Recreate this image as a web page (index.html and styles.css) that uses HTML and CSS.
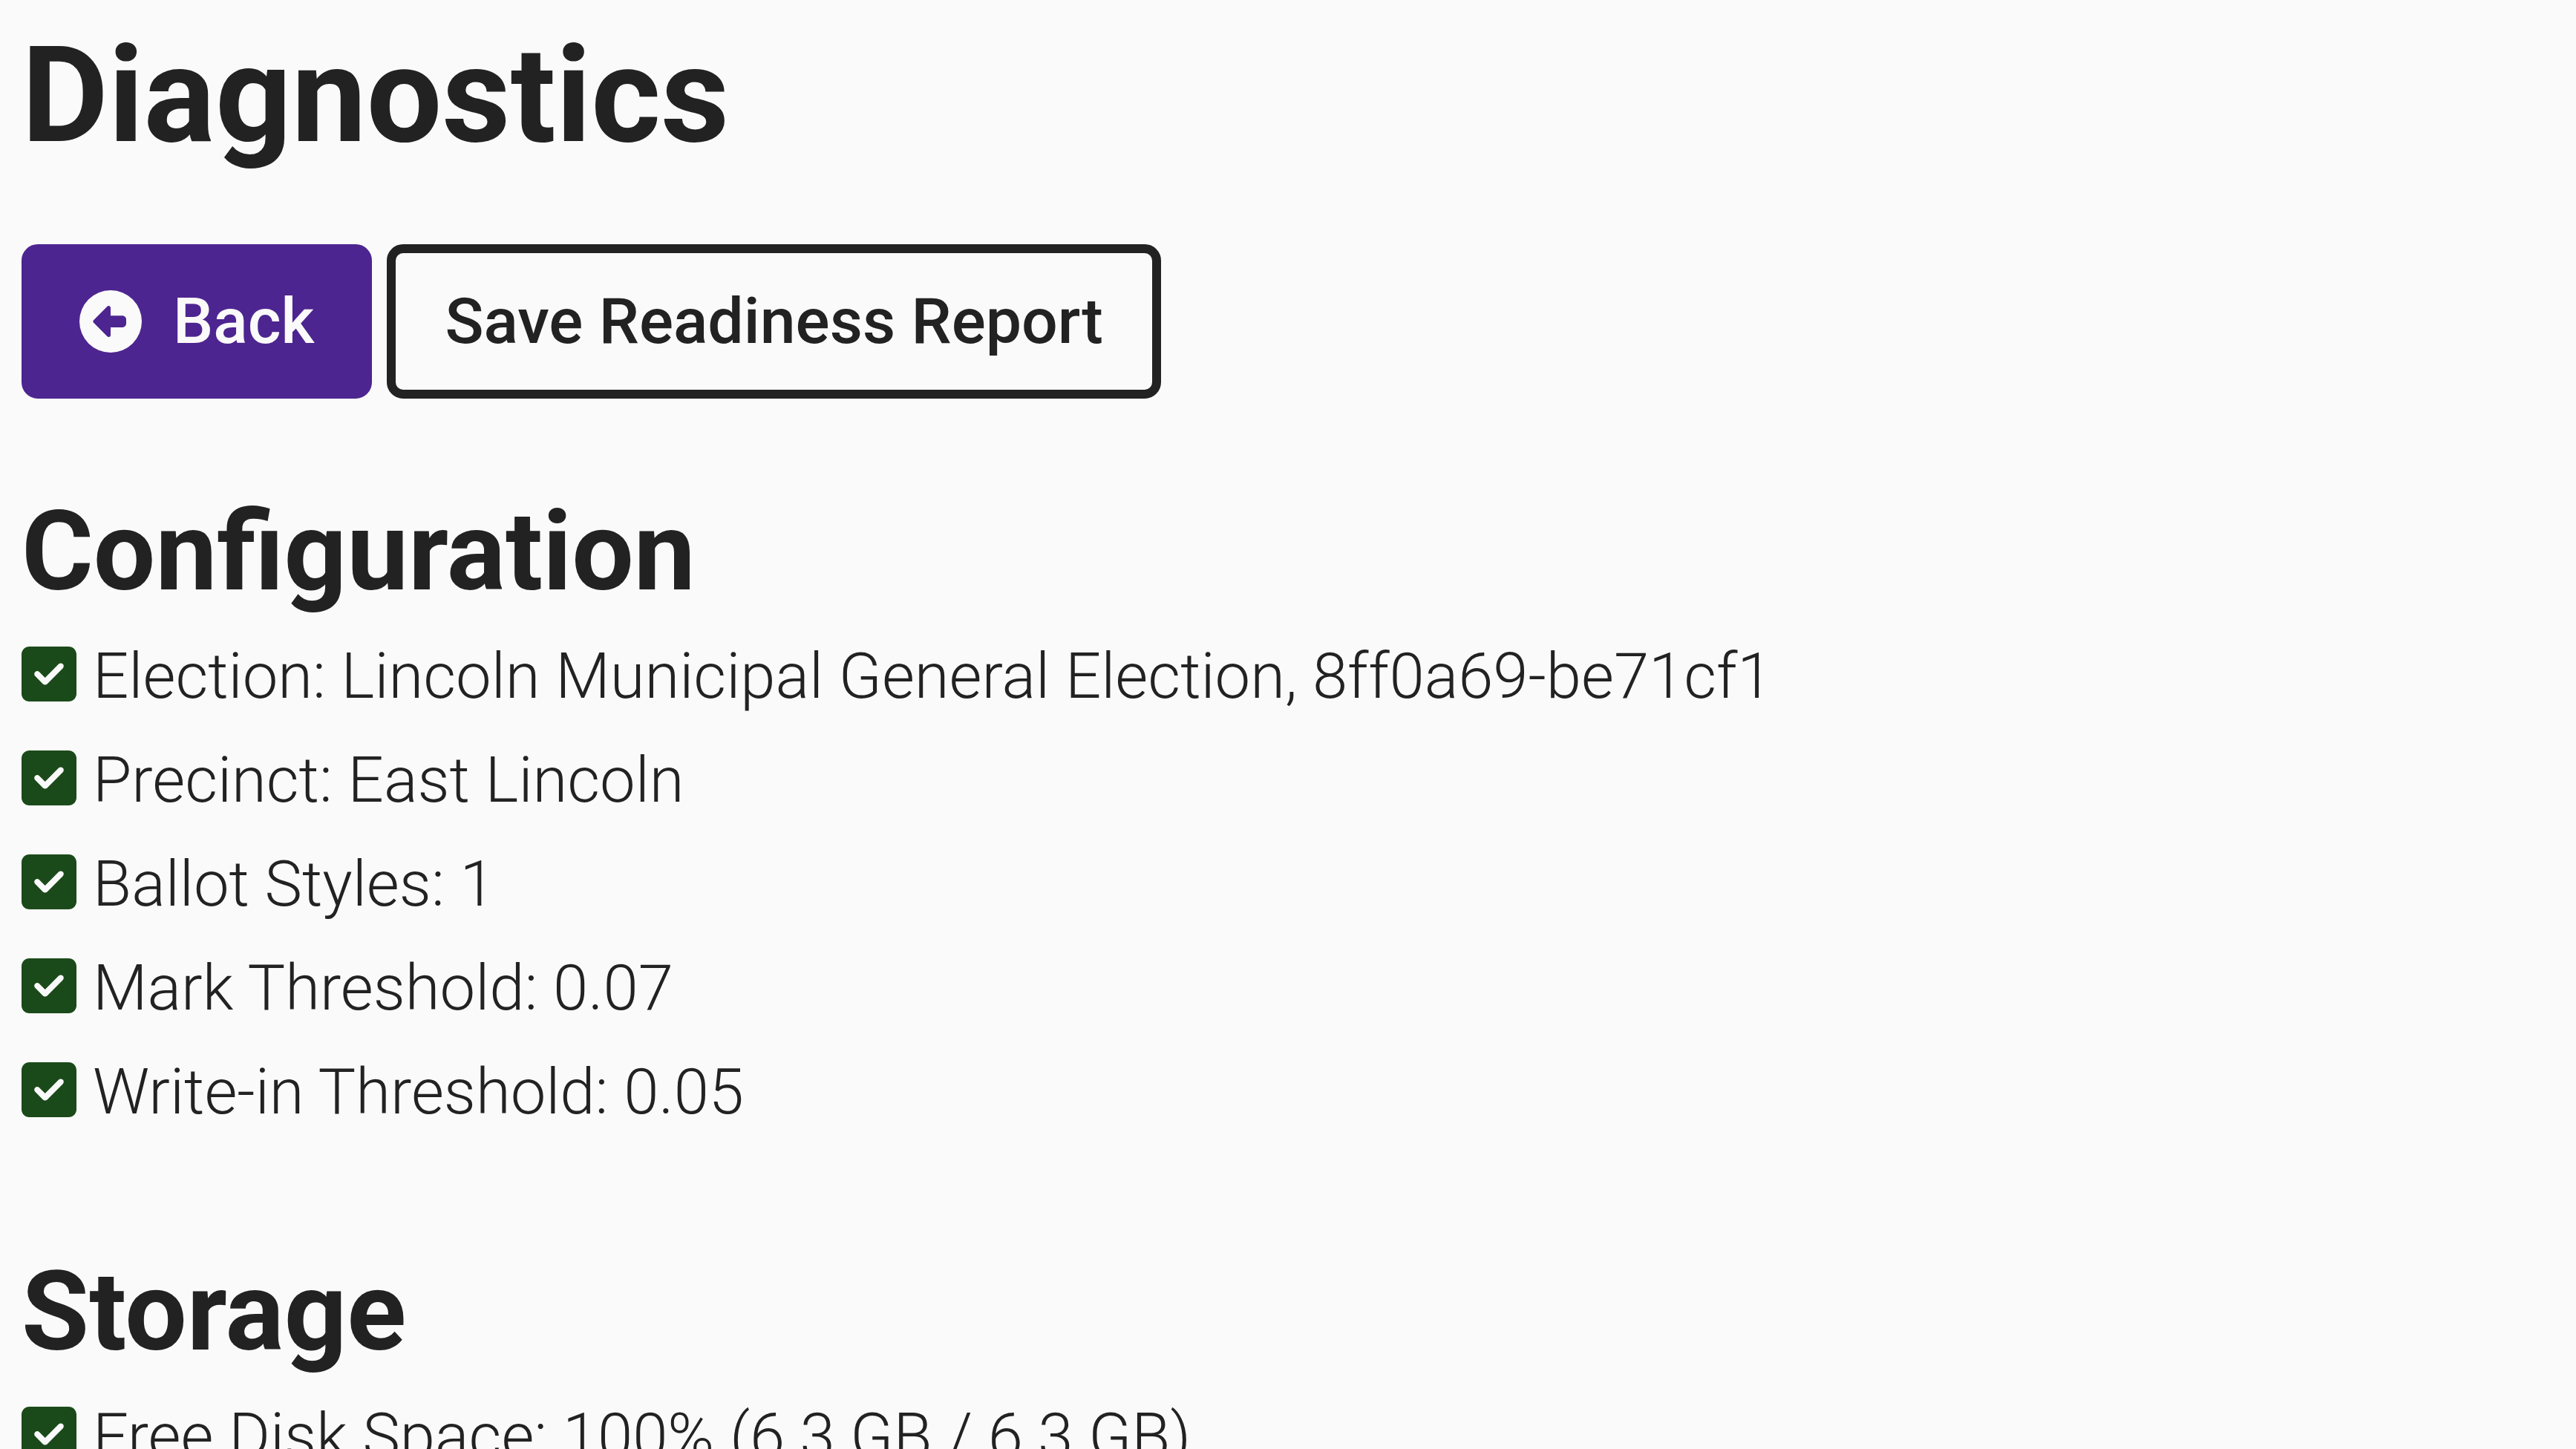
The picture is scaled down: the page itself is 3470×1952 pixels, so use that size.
FILE: index.html
```html
<!DOCTYPE html>
<html lang="en">
<head>
<meta charset="utf-8">
<meta name="viewport" content="width=device-width, initial-scale=1">
<title>Diagnostics</title>
<link rel="stylesheet" href="styles.css">
</head>
<body>
<svg class="sprite" aria-hidden="true">
  <symbol id="check" viewBox="0 32 448 448"><path d="M64 32C28.700 32 0 60.700 0 96V416c0 35.300 28.700 64 64 64H384c35.300 0 64-28.700 64-64V96c0-35.300-28.700-64-64-64H64zM337 209L209 337c-9.400 9.400-24.600 9.400-33.900 0l-64-64c-9.400-9.400-9.400-24.600 0-33.900s24.600-9.400 33.900 0l47 47L303 175c9.400-9.400 24.600-9.400 33.900 0s9.400 24.600 0 33.900z"/></symbol>
</svg>
<main class="screen">
  <h1 class="title">Diagnostics</h1>
  <div class="actions">
    <button class="button button-primary" type="button">
      <svg class="button-icon" viewBox="0 0 512 512" aria-hidden="true"><path d="M512 256A256 256 0 1 0 0 256a256 256 0 1 0 512 0zM116.700 244.700l112-112c4.600-4.600 11.500-5.900 17.400-3.500s9.900 8.300 9.900 14.800l0 64 96 0c17.700 0 32 14.300 32 32l0 32c0 17.700-14.300 32-32 32l-96 0 0 64c0 6.500-3.900 12.300-9.900 14.800s-12.900 1.100-17.400-3.500l-112-112c-6.200-6.200-6.200-16.400 0-22.600z"/></svg>
      <span>Back</span>
    </button>
    <button class="button" type="button">Save Readiness Report</button>
  </div>
  <section class="section">
    <h2 class="heading">Configuration</h2>
    <ul class="list">
      <li class="item"><svg class="check" aria-hidden="true"><use href="#check"/></svg><span>Election: Lincoln Municipal General Election, 8ff0a69-be71cf1</span></li>
      <li class="item"><svg class="check" aria-hidden="true"><use href="#check"/></svg><span>Precinct: East Lincoln</span></li>
      <li class="item"><svg class="check" aria-hidden="true"><use href="#check"/></svg><span>Ballot Styles: 1</span></li>
      <li class="item"><svg class="check" aria-hidden="true"><use href="#check"/></svg><span>Mark Threshold: 0.07</span></li>
      <li class="item"><svg class="check" aria-hidden="true"><use href="#check"/></svg><span>Write-in Threshold: 0.05</span></li>
    </ul>
  </section>
  <section class="section">
    <h2 class="heading">Storage</h2>
    <ul class="list">
      <li class="item"><svg class="check" aria-hidden="true"><use href="#check"/></svg><span>Free Disk Space: 100% (6.3 GB / 6.3 GB)</span></li>
    </ul>
  </section>
</main>
</body>
</html>
```

FILE: styles.css
```css
* { box-sizing: border-box; }
html { height: 100%; }
body {
  margin: 0;
  height: 100%;
  overflow: hidden;
  background: #fafafa;
  color: #222222;
  font: 300 85px/104px Roboto, sans-serif;
}
.sprite { display: none; }
.screen { padding: 21px 29px; }
.title { margin: 0 0 92px; font-size: 180px; line-height: 216px; font-weight: 700; }
.actions { display: flex; gap: 20px; margin-bottom: 117px; }
.button {
  display: flex;
  align-items: center;
  gap: 42px;
  height: 208px;
  padding: 0 66px;
  border: 12px solid #222222;
  border-radius: 22px;
  background: none;
  color: #222222;
  font: 500 86px/104px Roboto, sans-serif;
  white-space: nowrap;
}
.button-primary { border-color: #4d2590; background: #4d2590; color: #fafafa; }
.button-icon { width: 84px; height: 84px; fill: currentColor; }
.section { margin-bottom: 155px; }
.heading { margin: 0 0 25px; font-size: 148px; line-height: 180px; font-weight: 700; }
.list { margin: 0; padding: 0; list-style: none; display: grid; gap: 36px; }
.item { display: flex; align-items: flex-start; gap: 22px; white-space: nowrap; }
.check { flex: none; width: 74px; height: 74px; margin-top: 12px; fill: #1b4a1a; }
```
